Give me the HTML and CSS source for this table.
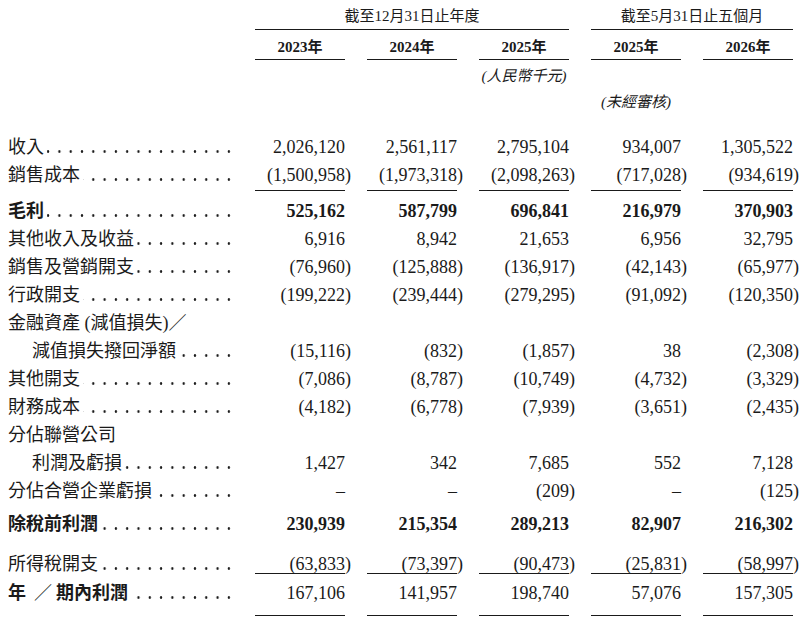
FILE: index.html
```html
<!DOCTYPE html>
<html lang="zh-Hant">
<head>
<meta charset="utf-8">
<title>綜合損益表</title>
<link rel="stylesheet" href="styles.css">
</head>
<body>
<div class="sheet">
  <div class="row hdr1">
    <div></div>
    <div class="grp g1">截至12月31日止年度</div>
    <div class="grp g2">截至5月31日止五個月</div>
  </div>
  <div class="row hdr2">
    <div></div>
    <div class="yr">2023年</div>
    <div class="yr">2024年</div>
    <div class="yr">2025年</div>
    <div class="yr">2025年</div>
    <div class="yr">2026年</div>
  </div>
  <div class="row hdr3">
    <div class="note c3">(人民幣千元)</div>
  </div>
  <div class="row hdr4">
    <div class="note c4">(未經審核)</div>
  </div>

  <div class="row r first">
    <div class="lbl"><span>收入</span><span class="lead"></span></div>
    <div class="n">2,026,120</div><div class="n">2,561,117</div><div class="n">2,795,104</div><div class="n">934,007</div><div class="n">1,305,522</div>
  </div>
  <div class="row r line1">
    <div class="lbl"><span>銷售成本</span><span class="lead"></span></div>
    <div class="n ul"><span class="neg">(1,500,958)</span></div><div class="n ul"><span class="neg">(1,973,318)</span></div><div class="n ul"><span class="neg">(2,098,263)</span></div><div class="n ul"><span class="neg">(717,028)</span></div><div class="n ul"><span class="neg">(934,619)</span></div>
  </div>
  <div class="row r after1 b">
    <div class="lbl"><span>毛利</span><span class="lead"></span></div>
    <div class="n">525,162</div><div class="n">587,799</div><div class="n">696,841</div><div class="n">216,979</div><div class="n">370,903</div>
  </div>
  <div class="row r">
    <div class="lbl"><span>其他收入及收益</span><span class="lead"></span></div>
    <div class="n">6,916</div><div class="n">8,942</div><div class="n">21,653</div><div class="n">6,956</div><div class="n">32,795</div>
  </div>
  <div class="row r">
    <div class="lbl"><span>銷售及營銷開支</span><span class="lead"></span></div>
    <div class="n"><span class="neg">(76,960)</span></div><div class="n"><span class="neg">(125,888)</span></div><div class="n"><span class="neg">(136,917)</span></div><div class="n"><span class="neg">(42,143)</span></div><div class="n"><span class="neg">(65,977)</span></div>
  </div>
  <div class="row r">
    <div class="lbl"><span>行政開支</span><span class="lead"></span></div>
    <div class="n"><span class="neg">(199,222)</span></div><div class="n"><span class="neg">(239,444)</span></div><div class="n"><span class="neg">(279,295)</span></div><div class="n"><span class="neg">(91,092)</span></div><div class="n"><span class="neg">(120,350)</span></div>
  </div>
  <div class="row r">
    <div class="lbl"><span>金融資產 (減值損失)／</span></div>
  </div>
  <div class="row r">
    <div class="lbl ind"><span>減值損失撥回淨額</span><span class="lead"></span></div>
    <div class="n"><span class="neg">(15,116)</span></div><div class="n"><span class="neg">(832)</span></div><div class="n"><span class="neg">(1,857)</span></div><div class="n">38</div><div class="n"><span class="neg">(2,308)</span></div>
  </div>
  <div class="row r">
    <div class="lbl"><span>其他開支</span><span class="lead"></span></div>
    <div class="n"><span class="neg">(7,086)</span></div><div class="n"><span class="neg">(8,787)</span></div><div class="n"><span class="neg">(10,749)</span></div><div class="n"><span class="neg">(4,732)</span></div><div class="n"><span class="neg">(3,329)</span></div>
  </div>
  <div class="row r">
    <div class="lbl"><span>財務成本</span><span class="lead"></span></div>
    <div class="n"><span class="neg">(4,182)</span></div><div class="n"><span class="neg">(6,778)</span></div><div class="n"><span class="neg">(7,939)</span></div><div class="n"><span class="neg">(3,651)</span></div><div class="n"><span class="neg">(2,435)</span></div>
  </div>
  <div class="row r">
    <div class="lbl"><span>分佔聯營公司</span></div>
  </div>
  <div class="row r">
    <div class="lbl ind"><span>利潤及虧損</span><span class="lead"></span></div>
    <div class="n">1,427</div><div class="n">342</div><div class="n">7,685</div><div class="n">552</div><div class="n">7,128</div>
  </div>
  <div class="row r">
    <div class="lbl"><span>分佔合營企業虧損</span><span class="lead"></span></div>
    <div class="n">–</div><div class="n">–</div><div class="n"><span class="neg">(209)</span></div><div class="n">–</div><div class="n"><span class="neg">(125)</span></div>
  </div>
  <div class="row r pbt b">
    <div class="lbl"><span>除稅前利潤</span><span class="lead"></span></div>
    <div class="n">230,939</div><div class="n">215,354</div><div class="n">289,213</div><div class="n">82,907</div><div class="n">216,302</div>
  </div>
  <div class="row r tax">
    <div class="lbl"><span>所得稅開支</span><span class="lead"></span></div>
    <div class="n ul"><span class="neg">(63,833)</span></div><div class="n ul"><span class="neg">(73,397)</span></div><div class="n ul"><span class="neg">(90,473)</span></div><div class="n ul"><span class="neg">(25,831)</span></div><div class="n ul"><span class="neg">(58,997)</span></div>
  </div>
  <div class="row r final">
    <div class="lbl bl"><span>年<span class="sl">／</span>期內利潤</span><span class="lead"></span></div>
    <div class="n ul">167,106</div><div class="n ul">141,957</div><div class="n ul">198,740</div><div class="n ul">57,076</div><div class="n ul">157,305</div>
  </div>
</div>
</body>
</html>
```

FILE: styles.css
```css
html, body {
  margin: 0;
  padding: 0;
  background: #ffffff;
}

body {
  color: #1a1a1a;
  font-family: "Liberation Serif", "Noto Sans CJK TC", serif;
}

.sheet {
  padding-left: 8px;
}

.row {
  display: grid;
  grid-template-columns: 225px repeat(5, 90px);
  column-gap: 22px;
}

/* header */
.hdr1, .hdr2, .hdr3, .hdr4 {
  font-size: 15px;
  line-height: 20px;
  text-align: center;
}

.hdr1 > div {
  padding: 6px 0 3px;
}

.grp {
  border-bottom: 1px solid #1a1a1a;
}

.g1 { grid-column: 2 / 5; }
.g2 { grid-column: 5 / 7; }

.hdr2 > div {
  padding: 7px 0 2px;
}

.yr {
  font-weight: 700;
  border-bottom: 1px solid #1a1a1a;
}

.hdr3, .hdr4 {
  margin-top: 6px;
}

.note {
  font-style: italic;
  white-space: nowrap;
}

.c3 { grid-column: 4; }
.c4 { grid-column: 5; }

/* body rows */
.r {
  font-size: 18px;
  line-height: 28px;
}

.first { margin-top: 21px; }

.line1 > .n { padding-bottom: 1px; }

.after1 { margin-top: 6px; }

.pbt { margin-top: 5px; }

.tax { margin-top: 12px; }
.tax > div { height: 23px; }

.final { margin-top: 5px; }
.final > div { padding-bottom: 8px; }

.b { font-weight: 700; }
.bl { font-weight: 700; }

.lbl {
  display: flex;
  align-items: baseline;
  white-space: nowrap;
}

.ind {
  padding-left: 24px;
}

.lead {
  flex: 1;
  height: 3px;
  margin: 0 2px 0 3px;
  background-image: radial-gradient(circle, #1a1a1a 1px, rgba(26, 26, 26, 0) 1.5px);
  background-size: 11.3px 3px;
  background-repeat: repeat-x;
  background-position: right -3.5px center;
}

.sl {
  margin: 0 4px 0 8px;
  font-weight: 400;
}

.n {
  text-align: right;
  white-space: nowrap;
}

.neg {
  margin-right: -6px;
}

.ul {
  border-bottom: 1px solid #1a1a1a;
}
```
